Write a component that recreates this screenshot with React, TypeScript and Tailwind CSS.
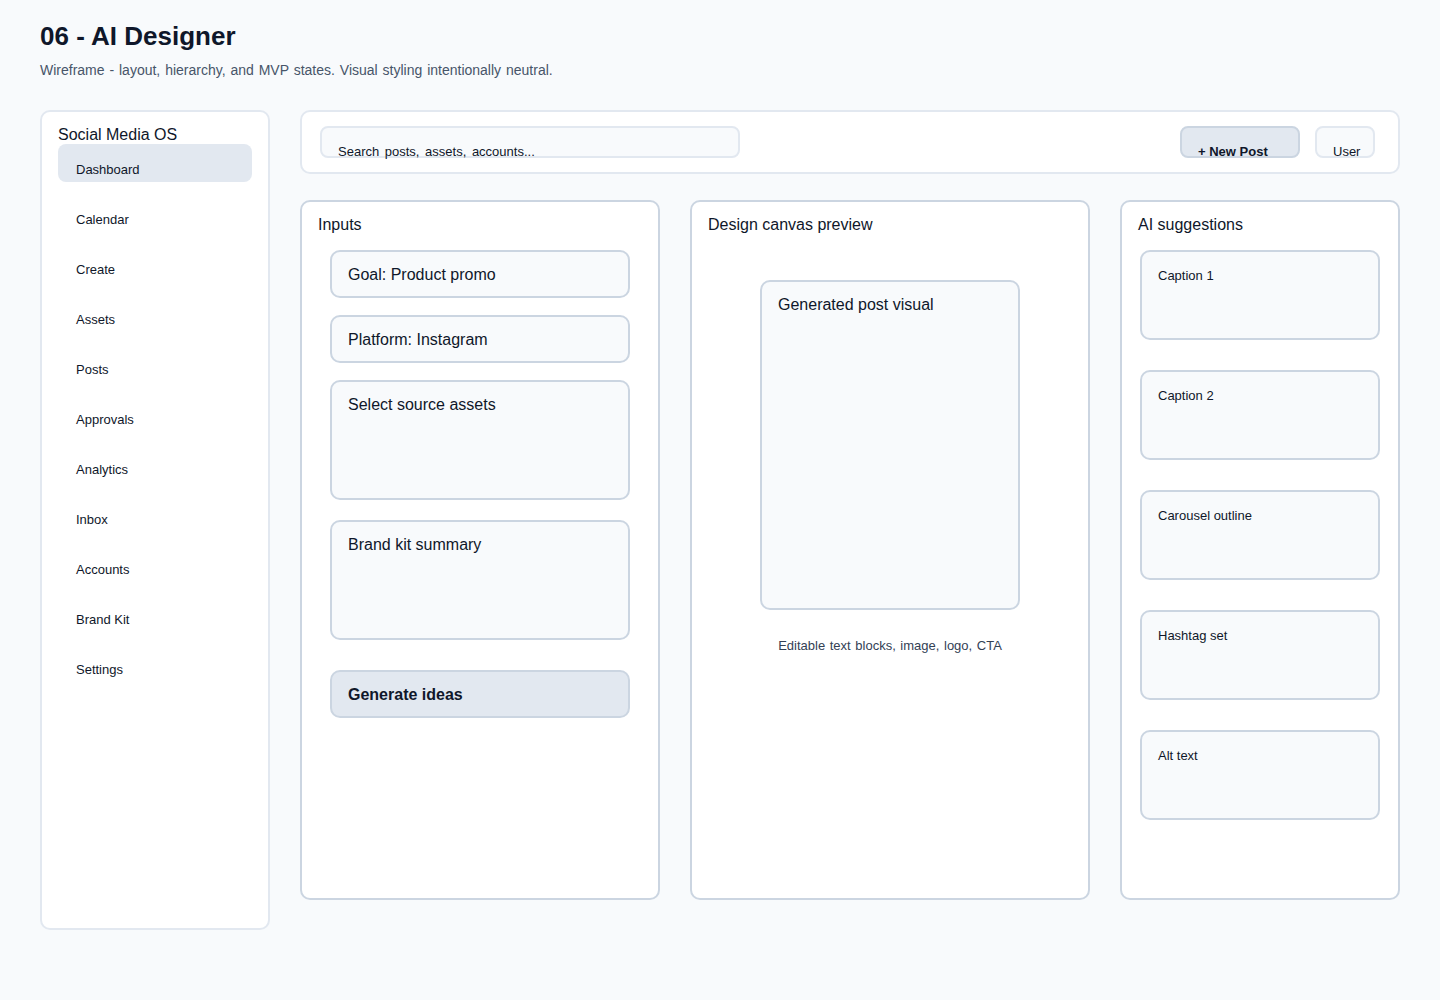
const navItems = [
  'Dashboard',
  'Calendar',
  'Create',
  'Assets',
  'Posts',
  'Approvals',
  'Analytics',
  'Inbox',
  'Accounts',
  'Brand Kit',
  'Settings',
];

const suggestions = ['Caption 1', 'Caption 2', 'Carousel outline', 'Hashtag set', 'Alt text'];

function Sidebar() {
  return (
    <aside className="h-[820px] w-[230px] shrink-0 rounded-[10px] border-2 border-[#e2e8f0] bg-white px-4 pt-[14.5px]">
      <div className="text-[16px] leading-none">Social Media OS</div>
      <nav className="mt-px flex flex-col gap-3">
        {navItems.map((item, i) => (
          <div
            key={item}
            className={
              i === 0
                ? 'h-[38px] rounded-lg bg-[#e2e8f0] pl-[18px] pt-[19px] text-[13px] leading-none'
                : 'h-[38px] rounded-lg pl-[18px] pt-[19px] text-[13px] leading-none'
            }
          >
            {item}
          </div>
        ))}
      </nav>
    </aside>
  );
}

function TopBar() {
  return (
    <header className="flex h-[64px] items-start rounded-[10px] border-2 border-[#e2e8f0] bg-white pl-[18px] pr-[23px] pt-[14px]">
      <div className="h-[32px] w-[420px] rounded-lg border-2 border-[#e2e8f0] bg-[#f8fafc] pl-[16px] pt-[16.5px] text-[13px] leading-none [word-spacing:2px]">
        Search posts, assets, accounts...
      </div>
      <div className="ml-auto h-[32px] w-[120px] rounded-lg border-2 border-[#cbd5e1] bg-[#e2e8f0] pl-[16px] pt-[16.5px] text-[13px] font-bold leading-none">
        + New Post
      </div>
      <div className="ml-[15px] h-[32px] w-[60px] rounded-lg border-2 border-[#e2e8f0] bg-[#f8fafc] pl-[16px] pt-[16.5px] text-[13px] leading-none">
        User
      </div>
    </header>
  );
}

function Field({ label, tall, strong }: { label: string; tall?: boolean; strong?: boolean }) {
  return (
    <div
      className={[
        'w-[300px] rounded-[10px] border-2 border-[#cbd5e1] pl-[16px] pt-[14.5px] text-[16px] leading-none',
        tall ? 'h-[120px]' : 'h-[48px]',
        strong ? 'bg-[#e2e8f0] font-bold' : 'bg-[#f8fafc]',
      ].join(' ')}
    >
      {label}
    </div>
  );
}

function InputsPanel() {
  return (
    <section className="h-full w-[360px] rounded-[10px] border-2 border-[#cbd5e1] bg-white pt-[15px]">
      <h2 className="pl-4 text-[16px] leading-none">Inputs</h2>
      <div className="mt-[17px] flex flex-col px-[28px]">
        <Field label="Goal: Product promo" />
        <div className="mt-[17px]">
          <Field label="Platform: Instagram" />
        </div>
        <div className="mt-[17px]">
          <Field label="Select source assets" tall />
        </div>
        <div className="mt-5">
          <Field label="Brand kit summary" tall />
        </div>
        <div className="mt-[30px]">
          <Field label="Generate ideas" strong />
        </div>
      </div>
    </section>
  );
}

function CanvasPanel() {
  return (
    <section className="h-full w-[400px] rounded-[10px] border-2 border-[#cbd5e1] bg-white pt-[15px]">
      <h2 className="pl-4 text-[16px] leading-none">Design canvas preview</h2>
      <div className="mx-auto mt-[47px] h-[330px] w-[260px] rounded-[10px] border-2 border-[#cbd5e1] bg-[#f8fafc] pl-[16px] pt-[14.5px] text-[16px] leading-none">
        Generated post visual
      </div>
      <p className="mt-[29px] text-center text-[13px] leading-none text-[#334155] [word-spacing:1px]">
        Editable text blocks, image, logo, CTA
      </p>
    </section>
  );
}

function SuggestionsPanel() {
  return (
    <section className="h-full w-[280px] rounded-[10px] border-2 border-[#cbd5e1] bg-white pt-[15px]">
      <h2 className="pl-4 text-[16px] leading-none">AI suggestions</h2>
      <div className="mt-[17px] flex flex-col gap-[30px] px-[18px]">
        {suggestions.map((s) => (
          <div
            key={s}
            className="h-[90px] rounded-[10px] border-2 border-[#cbd5e1] bg-[#f8fafc] pl-[16px] pt-[17px] text-[13px] leading-none"
          >
            {s}
          </div>
        ))}
      </div>
    </section>
  );
}

export default function App() {
  return (
    <div className="min-h-screen bg-[#f8fafc] px-10 pt-[23px] font-['Liberation_Sans',Arial,sans-serif] text-[#0f172a]">
      <h1 className="text-[26px] font-bold leading-none">06 - AI Designer</h1>
      <p className="mt-[14px] text-[14px] leading-none text-[#475569] [word-spacing:1px]">
        Wireframe - layout, hierarchy, and MVP states. Visual styling intentionally neutral.
      </p>
      <div className="mt-[33px] flex gap-[30px]">
        <Sidebar />
        <main className="flex-1">
          <TopBar />
          <div className="mt-[26px] flex h-[700px] gap-[30px]">
            <InputsPanel />
            <CanvasPanel />
            <SuggestionsPanel />
          </div>
        </main>
      </div>
    </div>
  );
}
